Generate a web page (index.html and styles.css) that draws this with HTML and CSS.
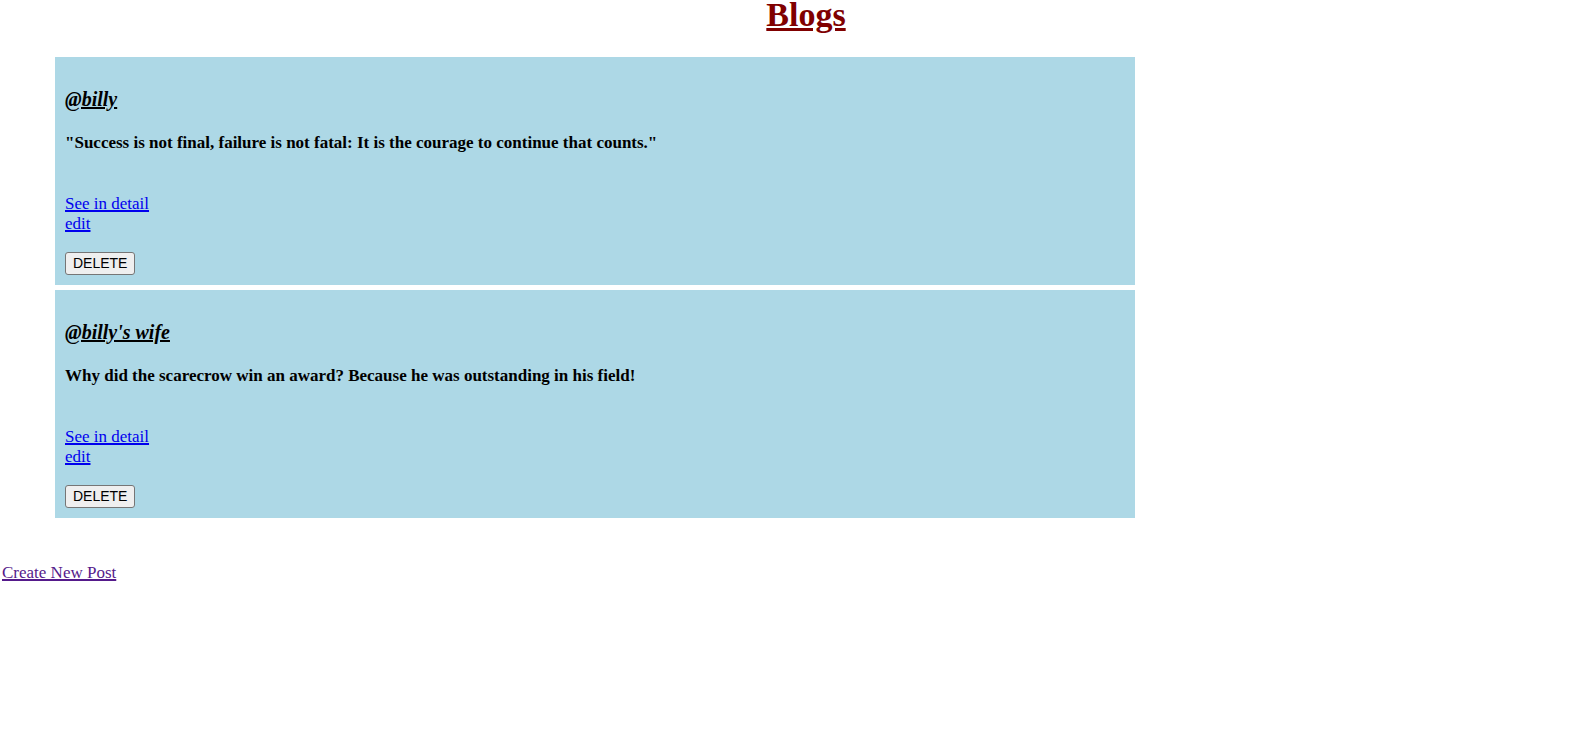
FILE: index.html
```html
<!DOCTYPE html>
<html lang="en">
<head>
<meta charset="utf-8">
<title>Blogs</title>
<link rel="stylesheet" href="styles.css">
</head>
<body>
<h1 class="title">Blogs</h1>
<main class="posts">
  <article class="post">
    <h3 class="author">@billy</h3>
    <h4 class="content">"Success is not final, failure is not fatal: It is the courage to continue that counts."</h4>
    <nav class="links"><a href="#billy">See in detail</a><a href="#edit-billy">edit</a></nav>
    <form><button type="button" class="delete">DELETE</button></form>
  </article>
  <article class="post">
    <h3 class="author">@billy's wife</h3>
    <h4 class="content">Why did the scarecrow win an award? Because he was outstanding in his field!</h4>
    <nav class="links"><a href="#wife">See in detail</a><a href="#edit-wife">edit</a></nav>
    <form><button type="button" class="delete">DELETE</button></form>
  </article>
</main>
<a class="create" href="#new">Create New Post</a>
</body>
</html>
```
FILE: styles.css
```css
body {
  margin: 0 0 0 2px;
  background: #fff;
  color: #000;
  font-family: "Liberation Serif", "Times New Roman", serif;
  font-size: 17px;
  line-height: 20px;
}

.title {
  margin: 0 -20px 27px 0;
  color: maroon;
  font-size: 34px;
  line-height: 30px;
  text-align: center;
  text-decoration: underline 3px;
}

.posts {
  display: flex;
  flex-direction: column;
  gap: 5px;
  width: 68%;
  margin-left: 53px;
}

.post {
  padding: 30px 10px 10px;
  background: lightblue;
}

.author {
  margin: 0 0 22px;
  font-size: 20px;
  line-height: 24px;
  font-style: italic;
  text-decoration: underline 2px;
}

.content {
  margin: 0 0 41px;
  font-size: 17px;
}

.links {
  display: flex;
  flex-direction: column;
  align-items: flex-start;
  margin-bottom: 18px;
}

a {
  color: #00e;
  text-decoration: underline 2px;
}

.delete {
  display: block;
  height: 23px;
  padding: 0 7px 2px;
  border: 1px solid #767676;
  border-radius: 3px;
  background: #efefef;
  color: #000;
  font-family: "Liberation Sans", Arial, sans-serif;
  font-size: 14px;
}

.create {
  display: inline-block;
  margin-top: 45px;
  color: #551a8b;
}
```
